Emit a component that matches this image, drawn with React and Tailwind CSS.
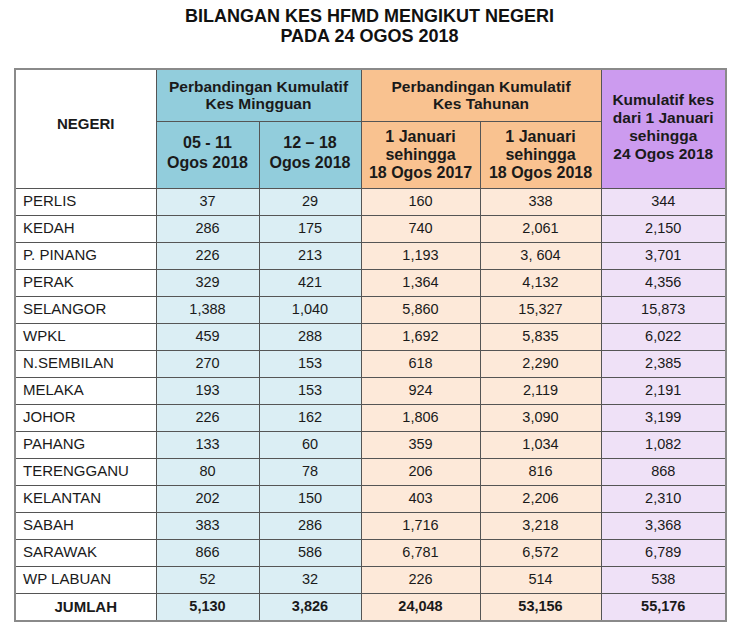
import React from 'react';

const rows = [
  ['PERLIS', '37', '29', '160', '338', '344'],
  ['KEDAH', '286', '175', '740', '2,061', '2,150'],
  ['P. PINANG', '226', '213', '1,193', '3, 604', '3,701'],
  ['PERAK', '329', '421', '1,364', '4,132', '4,356'],
  ['SELANGOR', '1,388', '1,040', '5,860', '15,327', '15,873'],
  ['WPKL', '459', '288', '1,692', '5,835', '6,022'],
  ['N.SEMBILAN', '270', '153', '618', '2,290', '2,385'],
  ['MELAKA', '193', '153', '924', '2,119', '2,191'],
  ['JOHOR', '226', '162', '1,806', '3,090', '3,199'],
  ['PAHANG', '133', '60', '359', '1,034', '1,082'],
  ['TERENGGANU', '80', '78', '206', '816', '868'],
  ['KELANTAN', '202', '150', '403', '2,206', '2,310'],
  ['SABAH', '383', '286', '1,716', '3,218', '3,368'],
  ['SARAWAK', '866', '586', '6,781', '6,572', '6,789'],
  ['WP LABUAN', '52', '32', '226', '514', '538'],
];

const totals = ['5,130', '3,826', '24,048', '53,156', '55,176'];

const cellBg = ['bg-[#dbeef4]', 'bg-[#dbeef4]', 'bg-[#fde9d9]', 'bg-[#fde9d9]', 'bg-[#efe1f7]'];

const App = () => {
  return (
    <div className="w-[750px] h-[638px] bg-white font-['Liberation_Sans',Arial,sans-serif] text-[#1a1a1a]">
      <div className="ml-[14px] w-[711px] pt-[6px]">
        <h1 className="text-center text-[18px] font-bold leading-[20px] text-[#111]">
          BILANGAN KES HFMD MENGIKUT NEGERI
          <br />
          PADA 24 OGOS 2018
        </h1>

        <table className="mt-[22px] w-[711px] table-fixed border-collapse border-2 border-[#8a8a8a]">
          <colgroup>
            <col className="w-[141px]" />
            <col className="w-[103px]" />
            <col className="w-[102px]" />
            <col className="w-[119px]" />
            <col className="w-[121px]" />
            <col className="w-[125px]" />
          </colgroup>
          <thead>
            <tr className="h-[52px]">
              <th rowSpan={2} className="border border-[#555] bg-white text-[15px] font-bold pb-[10px]">
                NEGERI
              </th>
              <th colSpan={2} className="border border-[#555] bg-[#92cddc] text-[15.5px] font-bold leading-[17px]">
                Perbandingan Kumulatif
                <br />
                Kes Mingguan
              </th>
              <th colSpan={2} className="border border-[#555] bg-[#f9c290] text-[15.5px] font-bold leading-[17px]">
                Perbandingan Kumulatif
                <br />
                Kes Tahunan
              </th>
              <th rowSpan={2} className="border border-[#555] bg-[#cc9bef] text-[15.5px] font-bold leading-[18px] pb-[4px]">
                Kumulatif kes
                <br />
                dari 1 Januari
                <br />
                sehingga
                <br />
                24 Ogos 2018
              </th>
            </tr>
            <tr className="h-[67px]">
              <th className="border border-[#555] bg-[#92cddc] text-[16px] font-bold leading-[20px] pb-[4px]">
                05 - 11
                <br />
                Ogos 2018
              </th>
              <th className="border border-[#555] bg-[#92cddc] text-[16px] font-bold leading-[20px] pb-[4px]">
                12 – 18
                <br />
                Ogos 2018
              </th>
              <th className="border border-[#555] bg-[#f9c290] text-[16px] font-bold leading-[18px]">
                1 Januari
                <br />
                sehingga
                <br />
                18 Ogos 2017
              </th>
              <th className="border border-[#555] bg-[#f9c290] text-[16px] font-bold leading-[18px]">
                1 Januari
                <br />
                sehingga
                <br />
                18 Ogos 2018
              </th>
            </tr>
          </thead>
          <tbody>
            {rows.map((row, index) => (
              <tr key={index} className="h-[27px]">
                <td className="border border-[#555] bg-white pl-[7px] text-[15px]">{row[0]}</td>
                {row.slice(1).map((value, i) => (
                  <td key={i} className={`border border-[#555] text-center text-[14.5px] ${cellBg[i]}`}>
                    {value}
                  </td>
                ))}
              </tr>
            ))}
            <tr className="h-[28px]">
              <td className="border border-[#555] bg-white text-center text-[15px] font-bold">JUMLAH</td>
              {totals.map((value, i) => (
                <td key={i} className={`border border-[#555] text-center text-[14.5px] font-bold ${cellBg[i]}`}>
                  {value}
                </td>
              ))}
            </tr>
          </tbody>
        </table>
      </div>
    </div>
  );
};

export default App;
